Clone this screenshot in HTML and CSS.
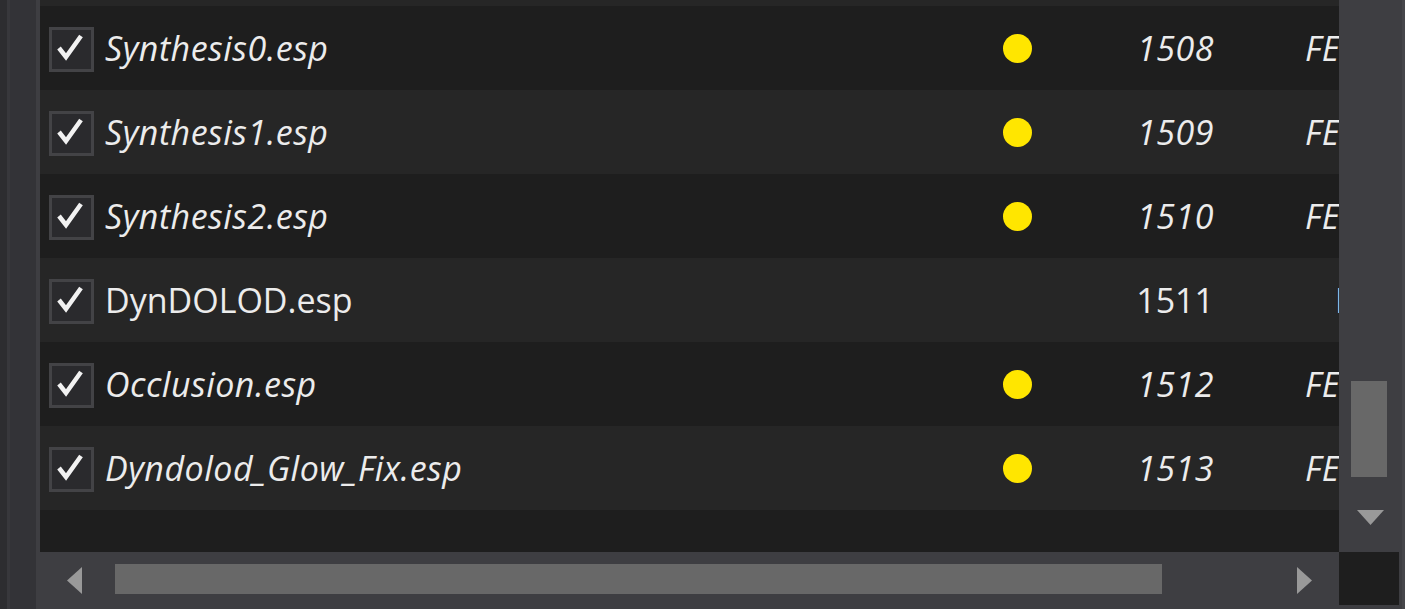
FILE: index.html
```html
<!DOCTYPE html>
<html lang="en">
<head>
    <meta charset="UTF-8">
    <meta name="viewport" content="width=device-width, initial-scale=1.0">
    <title>Plugin List</title>
    <link rel="stylesheet" href="styles.css">
</head>
<body>
    <div class="window">
        <div class="gutter"><div class="gutter-inner"></div></div>
        <div class="pane">
            <div class="list">
                <div class="row-cut"></div>
                <div class="row odd">
                    <div class="check"><svg viewBox="0 0 39 39"><polyline points="7,18 14,27 29,6"/></svg></div>
                    <div class="name ghost">Synthesis0.esp</div>
                    <div class="dot"></div>
                    <div class="num ghost">1508</div>
                    <div class="tail ghost">FE</div>
                </div>
                <div class="row even">
                    <div class="check"><svg viewBox="0 0 39 39"><polyline points="7,18 14,27 29,6"/></svg></div>
                    <div class="name ghost">Synthesis1.esp</div>
                    <div class="dot"></div>
                    <div class="num ghost">1509</div>
                    <div class="tail ghost">FE</div>
                </div>
                <div class="row odd">
                    <div class="check"><svg viewBox="0 0 39 39"><polyline points="7,18 14,27 29,6"/></svg></div>
                    <div class="name ghost">Synthesis2.esp</div>
                    <div class="dot"></div>
                    <div class="num ghost">1510</div>
                    <div class="tail ghost">FE</div>
                </div>
                <div class="row even">
                    <div class="check"><svg viewBox="0 0 39 39"><polyline points="7,18 14,27 29,6"/></svg></div>
                    <div class="name">DynDOLOD.esp</div>
                    <div class="nodot"></div>
                    <div class="num">1511</div>
                    <div class="tail late">E</div>
                </div>
                <div class="row odd">
                    <div class="check"><svg viewBox="0 0 39 39"><polyline points="7,18 14,27 29,6"/></svg></div>
                    <div class="name ghost">Occlusion.esp</div>
                    <div class="dot"></div>
                    <div class="num ghost">1512</div>
                    <div class="tail ghost">FE</div>
                </div>
                <div class="row even">
                    <div class="check"><svg viewBox="0 0 39 39"><polyline points="7,18 14,27 29,6"/></svg></div>
                    <div class="name ghost">Dyndolod_Glow_Fix.esp</div>
                    <div class="dot"></div>
                    <div class="num ghost">1513</div>
                    <div class="tail ghost">FE</div>
                </div>
            </div>
            <div class="vscroll">
                <div class="vthumb"></div>
                <svg class="arrow-down" viewBox="0 0 27 15"><polygon points="0,0 27,0 13.5,15"/></svg>
            </div>
            <div class="hscroll">
                <svg class="arrow-side" viewBox="0 0 15 27"><polygon points="15,0 15,27 0,13.5"/></svg>
                <div class="htrack"><div class="hthumb"></div></div>
                <svg class="arrow-side" viewBox="0 0 15 27"><polygon points="0,0 0,27 15,13.5"/></svg>
            </div>
            <div class="corner"><div class="corner-box"></div></div>
        </div>
        <div class="edge"></div>
    </div>
</body>
</html>
```

FILE: styles.css
```css
body {
    margin: 0;
    background: #1e1e1e;
    font-family: "Open Sans", "Noto Sans", sans-serif;
    overflow: hidden;
}
.window {
    display: flex;
    height: 609px;
}
.gutter {
    width: 29px;
    padding-left: 7px;
    background: #2d2d30;
    border-right: 4px solid #3e3e42;
}
.gutter-inner {
    height: 100%;
    background: #333337;
    border-left: 3px solid #38383c;
}
.pane {
    flex: 1;
    display: grid;
    grid-template-columns: 1fr 63px;
    grid-template-rows: 552px 57px;
}
.list {
    overflow: hidden;
    background: #1e1e1e;
}
.row-cut {
    height: 6px;
    background: #262626;
}
.row {
    height: 84px;
    display: grid;
    grid-template-columns: 45px 909px 29px 182px 1fr;
    align-items: center;
    padding-left: 9px;
    color: #ececec;
    font-size: 34px;
    white-space: nowrap;
}
.odd { background: #1e1e1e; }
.even { background: #262626; }
.check {
    width: 39px;
    height: 39px;
    border: 3px solid #434346;
    background: #2a2a2d;
    margin-top: 3px;
}
.check svg {
    display: block;
    width: 39px;
    height: 39px;
}
.check polyline {
    fill: none;
    stroke: #f2f2f2;
    stroke-width: 4.5;
}
.name {
    padding-left: 11px;
}
.ghost {
    font-style: italic;
    letter-spacing: 0.5px;
}
.dot {
    width: 29px;
    height: 29px;
    border-radius: 50%;
    background: #ffe600;
}
.nodot {
    height: 29px;
}
.num {
    text-align: right;
}
.tail {
    padding-left: 91px;
    overflow: hidden;
}
.tail.late {
    padding-left: 121px;
}
.vscroll {
    background: #3e3e42;
    display: flex;
    flex-direction: column;
    align-items: flex-start;
}
.vthumb {
    width: 36px;
    height: 96px;
    margin: 381px 0 0 12px;
    background: #686868;
}
.arrow-down {
    width: 27px;
    height: 15px;
    margin: 33px 0 0 18px;
    fill: #999999;
}
.hscroll {
    background: #3e3e42;
    display: flex;
    align-items: flex-start;
    padding-top: 12px;
}
.arrow-side {
    width: 15px;
    height: 27px;
    margin-top: 3px;
    fill: #999999;
}
.hscroll .arrow-side:first-child {
    margin-left: 27px;
}
.htrack {
    flex: 1;
    margin: 0 -27px 0 33px;
}
.hthumb {
    width: 1047px;
    height: 30px;
    background: #686868;
}
.hscroll .arrow-side:last-child {
    margin-left: 0;
    margin-right: 27px;
}
.corner {
    background: #3e3e42;
}
.corner-box {
    width: 60px;
    height: 53px;
    background: #1e1e1e;
}
.edge {
    width: 3px;
    background: #46464a;
}
```
